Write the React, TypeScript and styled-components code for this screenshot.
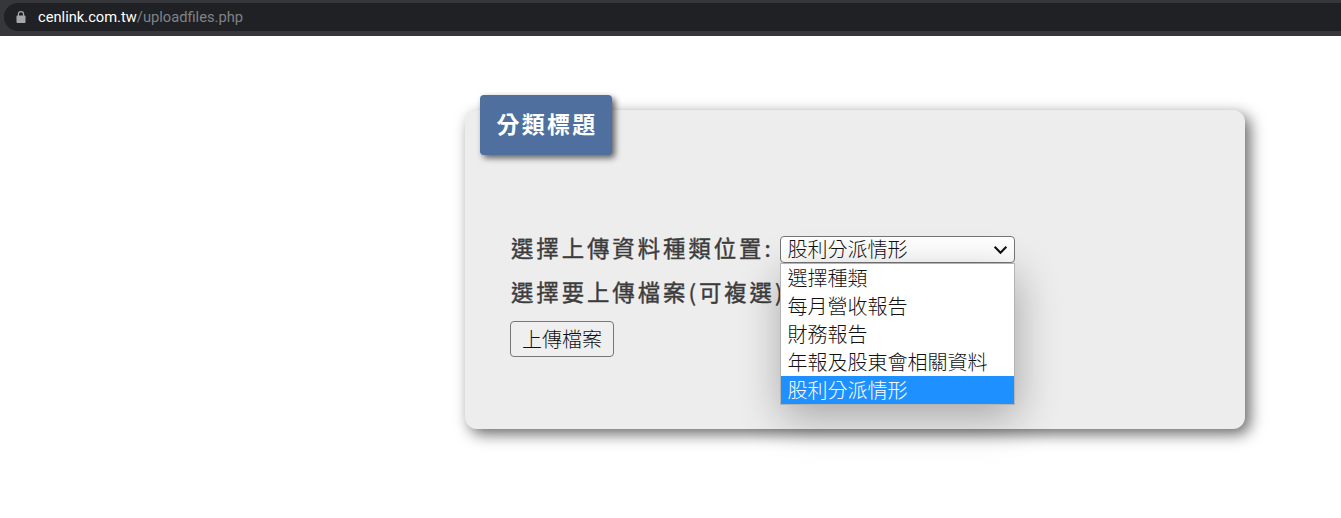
import React from "react";
import styled, { createGlobalStyle } from "styled-components";

const CJK = `"Noto Sans CJK TC", "Liberation Sans", sans-serif`;

const GlobalStyle = createGlobalStyle`
  html, body {
    margin: 0;
    padding: 0;
    background: #fff;
  }
  html {
    overflow: hidden;
  }
  body {
    min-height: 518px;
    font-family: ${CJK};
  }
`;

const BrowserBar = styled.div`
  height: 36px;
  box-sizing: border-box;
  background: #36373b;
  padding: 3px 0 5px 4px;
`;

const AddressPill = styled.div`
  height: 28px;
  display: flex;
  align-items: center;
  padding-left: 12px;
  background: #202124;
  border-radius: 14px 0 0 14px;
  font-family: Roboto, "Liberation Sans", sans-serif;
  font-size: 14.7px;
`;

const LockIcon = styled.svg`
  width: 10px;
  height: 12px;
  margin-right: 12px;
`;

const Host = styled.span`
  color: #fff;
`;

const Path = styled.span`
  color: #7f8388;
`;

const Main = styled.main`
  padding: 74px 0 0 465px;
`;

const Card = styled.section`
  position: relative;
  width: 780px;
  height: 319px;
  box-sizing: border-box;
  padding: 123px 45px 0;
  background: #ededed;
  border-radius: 12px;
  box-shadow: 5px 5px 15px rgba(0, 0, 0, 0.6);
`;

const TitleTag = styled.h2`
  position: absolute;
  left: 15px;
  top: -15px;
  width: 132px;
  height: 60px;
  box-sizing: border-box;
  margin: 0;
  padding: 0 0 4px 2px;
  display: flex;
  align-items: center;
  justify-content: center;
  background: #4f6f9f;
  border-radius: 4px;
  box-shadow: 3px 3px 6px rgba(0, 0, 0, 0.6);
  color: #fff;
  font-size: 23px;
  font-weight: 700;
  letter-spacing: 2.3px;
  line-height: 1;
`;

const FormRow = styled.div`
  display: flex;
  align-items: center;
  height: 32px;
  margin-bottom: 12px;
`;

const FieldLabel = styled.label`
  margin-left: 1px;
  padding-bottom: 4px;
  color: #3c3c3c;
  font-size: 22.4px;
  font-weight: 400;
  letter-spacing: 2.95px;
  line-height: 1;
  white-space: nowrap;
  -webkit-text-stroke: 0.4px #3c3c3c;
`;

const SelectWrap = styled.div`
  position: relative;
  margin-left: 6px;
  z-index: 2;
`;

const SelectBox = styled.div`
  width: 235px;
  height: 27px;
  box-sizing: border-box;
  display: flex;
  align-items: center;
  justify-content: space-between;
  padding: 0 5px 0 7px;
  background: #fff;
  border: 1px solid #767676;
  border-radius: 4px;
  color: #111;
  font-size: 20px;
  font-weight: 300;
  line-height: 1;
`;

const Chevron = styled.svg`
  width: 17px;
  height: 17px;
`;

const OptionList = styled.ul`
  position: absolute;
  left: 0;
  top: 27px;
  width: 235px;
  box-sizing: border-box;
  margin: 0;
  padding: 0;
  list-style: none;
  background: #fff;
  border: 1px solid #b4b4b4;
  box-shadow: 2px 12px 40px rgba(0, 0, 0, 0.3);
`;

const OptionItem = styled.li<{ $active?: boolean }>`
  height: 28px;
  display: flex;
  align-items: center;
  padding-left: 7px;
  background: ${(p) => (p.$active ? "#1e90ff" : "transparent")};
  color: ${(p) => (p.$active ? "#fff" : "#111")};
  font-size: 20px;
  font-weight: 300;
  line-height: 1;
  white-space: nowrap;
`;

const UploadButton = styled.button`
  width: 104px;
  height: 36px;
  padding: 0;
  background: #efefef;
  border: 1px solid #767676;
  border-radius: 4px;
  color: #111;
  font-family: ${CJK};
  font-size: 20px;
  font-weight: 300;
  line-height: 1;
`;

const options = ["選擇種類", "每月營收報告", "財務報告", "年報及股東會相關資料", "股利分派情形"];

export default function App() {
  return (
    <>
      <GlobalStyle />
      <BrowserBar>
        <AddressPill>
          <LockIcon viewBox="0 0 10 12">
            <path
              d="M1.8 4.6V3.2a3.2 3.2 0 0 1 6.4 0v1.4h.5c.5 0 .8.4.8.8v5.6c0 .5-.3.9-.8.9H1.3c-.5 0-.8-.4-.8-.9V5.4c0-.4.3-.8.8-.8zM3 4.6h4V3.2a2 2 0 0 0-4 0z"
              fill="#a5a7aa"
              fillRule="evenodd"
            />
          </LockIcon>
          <Host>cenlink.com.tw</Host>
          <Path>/uploadfiles.php</Path>
        </AddressPill>
      </BrowserBar>
      <Main>
        <Card>
          <TitleTag>分類標題</TitleTag>
          <FormRow>
            <FieldLabel>選擇上傳資料種類位置:</FieldLabel>
            <SelectWrap>
              <SelectBox>
                股利分派情形
                <Chevron viewBox="0 0 16 16">
                  <path d="M2.5 5.5 8 11l5.5-5.5" fill="none" stroke="#111" strokeWidth="2" />
                </Chevron>
              </SelectBox>
              <OptionList>
                {options.map((o, i) => (
                  <OptionItem key={o} $active={i === options.length - 1}>
                    {o}
                  </OptionItem>
                ))}
              </OptionList>
            </SelectWrap>
          </FormRow>
          <FormRow>
            <FieldLabel>選擇要上傳檔案(可複選):</FieldLabel>
          </FormRow>
          <UploadButton>上傳檔案</UploadButton>
        </Card>
      </Main>
    </>
  );
}
